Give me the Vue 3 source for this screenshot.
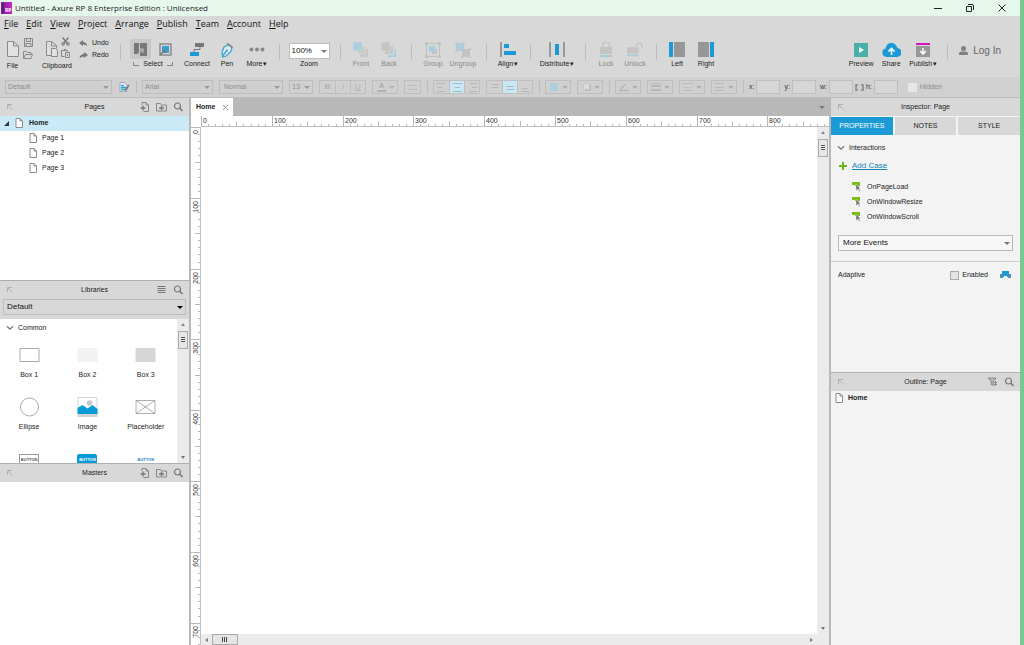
<script setup>
import { ref } from 'vue'

const menus = ['File', 'Edit', 'View', 'Project', 'Arrange', 'Publish', 'Team', 'Account', 'Help']

const tools = [
  { id: 'connect', label: 'Connect', w: 'w38' },
  { id: 'pen', label: 'Pen', w: 'w22' },
  { id: 'more', label: 'More', w: 'w38', menu: true },
]
const arrange = [
  { sep: true, w: 'w8' },
  { id: 'front', label: 'Front', w: 'w34', off: true },
  { id: 'back', label: 'Back', w: 'w22', off: true },
  { sep: true, w: 'w22' },
  { id: 'group', label: 'Group', w: 'w22', off: true },
  { id: 'ungroup', label: 'Ungroup', w: 'w38', off: true },
  { sep: true, w: 'w8' },
  { id: 'align', label: 'Align', w: 'w36', menu: true },
  { sep: true, w: 'w8' },
  { id: 'distribute', label: 'Distribute', w: 'w46', menu: true },
  { sep: true, w: 'w10' },
  { id: 'lock', label: 'Lock', w: 'w32', off: true },
  { id: 'unlock', label: 'Unlock', w: 'w26', off: true },
  { sep: true, w: 'w16' },
  { id: 'left', label: 'Left', w: 'w26' },
  { id: 'right', label: 'Right', w: 'w32' },
]
const share = [
  { id: 'preview', label: 'Preview', w: 'w30' },
  { id: 'share', label: 'Share', w: 'w30' },
  { id: 'publish', label: 'Publish', w: 'w34', menu: true },
]
const lineTools = ['linecolor', 'linewidth', 'linestyle', 'arrowstyle']

const pages = ['Page 1', 'Page 2', 'Page 3']
const widgets = [
  { id: 'box1', label: 'Box 1' },
  { id: 'box2', label: 'Box 2' },
  { id: 'box3', label: 'Box 3' },
  { id: 'ellipse', label: 'Ellipse' },
  { id: 'image', label: 'Image' },
  { id: 'placeholder', label: 'Placeholder' },
]
const events = ['OnPageLoad', 'OnWindowResize', 'OnWindowScroll']
const tabs = ['PROPERTIES', 'NOTES', 'STYLE']
const activeTab = ref('PROPERTIES')

const hundred = 70.8
const ticks = Array.from({ length: 300 }, (_, i) => ({
  pos: Math.round((i * hundred) / 10),
  size: i % 10 === 0 ? 10 : i % 5 === 0 ? 5 : 2,
}))
const marks = (count) => Array.from({ length: count }, (_, i) => ({ pos: Math.round(i * hundred), text: i * 100 }))
const across = marks(9)
const down = marks(8)
</script>

<template>
  <svg class="defs" aria-hidden="true">
    <symbol id="i-page" viewBox="0 0 8 10"><path d="M1 .5h4L7.500 3v6.500H1zM5 .5V3h2.500" fill="#fff" stroke="#8a8a8a" /></symbol>
    <symbol id="i-dock" viewBox="0 0 6 6"><path d="M.5 5V.5H5M1 1l4.500 4.500" fill="none" stroke="#b0b0b0" /></symbol>
    <symbol id="i-search" viewBox="0 0 10 10"><circle cx="4" cy="4" r="3" fill="none" stroke="#777" stroke-width="1.200" /><path d="M6 6l3 3" stroke="#777" stroke-width="1.600" /></symbol>
    <symbol id="i-addpage" viewBox="0 0 10 10"><path d="M2.500 3V.5h4L9 3v6.500H4M6.500.5V3H9" fill="none" stroke="#888" /><path d="M1 6h5M3.500 3.500v5" stroke="#777" stroke-width="1.300" /></symbol>
    <symbol id="i-addfolder" viewBox="0 0 11 10"><path d="M.5 9V1.500h4l1 1.500h5v6z" fill="none" stroke="#888" /><path d="M3 6h5M5.500 3.800v4.400" stroke="#777" stroke-width="1.300" /></symbol>
    <symbol id="i-list" viewBox="0 0 8 8"><path d="M0 .5h8M0 2.500h8M0 4.500h8M0 6.500h8" stroke="#777" /></symbol>
    <symbol id="i-filter" viewBox="0 0 10 10"><path d="M.7 1h8L5.700 4.500v4L3.700 7.500v-3z" fill="#bbb" stroke="#888" /><path d="M8 4v5M6.500 5.500h3M6.500 7.500h3" stroke="#888" /></symbol>
    <symbol id="i-chev" viewBox="0 0 8 6"><path d="M1 1.200l3 3 3-3" fill="none" stroke="#777" stroke-width="1.300" /></symbol>

    <symbol id="i-connect" viewBox="0 0 16 16"><path d="M6 1h9v4H6z" fill="#777" /><path d="M11 5v2.500H5V10" fill="none" stroke="#777" /><path d="M1 10h9v4H1z" fill="#1c9ad6" /></symbol>
    <symbol id="i-pen" viewBox="0 0 16 16"><path d="M5 5l5-2.500 3 3-1 4-5 4.500-3.500 1-.5-5z" fill="#d8e8f0" stroke="#35a0d2" stroke-width="1.200" /><path d="M8 1.500l5.500 4" stroke="#888" stroke-width="1.800" /><path d="M3.500 14l4-5M7 8.500h2" stroke="#35a0d2" stroke-width="1.300" /></symbol>
    <symbol id="i-more" viewBox="0 0 16 16"><g fill="#888"><circle cx="2.500" cy="7.500" r="2" /><circle cx="8" cy="7.500" r="2" /><circle cx="13.500" cy="7.500" r="2" /></g></symbol>
    <symbol id="i-front" viewBox="0 0 16 16"><path d="M7 7h8v8H7z" fill="#c9c9c9" /><path d="M4 4h8v8H4z" fill="#d6d6d6" /><path d="M5 5h6v6H5z" fill="#c5c5c5" /><path d="M0 0h9v9H0z" fill="#abcfdf" stroke="#d8d8d8" stroke-width=".5" /></symbol>
    <symbol id="i-back" viewBox="0 0 16 16"><path d="M7 7h8v8H7z" fill="#abcfdf" /><path d="M4 4h9v9H4z" fill="#d8d8d8" /><path d="M4 4h8v8H4z" fill="#c7c7c7" /><path d="M0 0h9v9H0z" fill="#c5c5c5" stroke="#d8d8d8" stroke-width=".5" /></symbol>
    <symbol id="i-group" viewBox="0 0 16 16"><path d="M1.500 1.500h13v13h-13z" fill="none" stroke="#c2c2c2" /><path d="M0 0h3v3H0zM13 0h3v3h-3zM0 13h3v3H0zM13 13h3v3h-3zM7 7h5v5H7z" fill="#c2c2c2" /><path d="M4 4h6v6H4z" fill="#a8cfe0" /></symbol>
    <symbol id="i-ungroup" viewBox="0 0 16 16"><path d="M1 1h8v8H1z" fill="#afccda" /><path d="M0 0h2v2H0zM8 0h2v2H8zM0 8h2v2H0z" fill="#bcc8ce" /><path d="M7 7h8v8H7z" fill="#c2c2c2" /><path d="M6 6h2v2H6zM14 6h2v2h-2zM6 14h2v2H6zM14 14h2v2h-2z" fill="#c4c4c4" /></symbol>
    <symbol id="i-align" viewBox="0 0 16 16"><path d="M0 0h2v15H0z" fill="#999" /><path d="M4 2h5v4H4zM4 9h12v4H4z" fill="#1c9ad6" /></symbol>
    <symbol id="i-distribute" viewBox="0 0 16 16"><path d="M0 0h2v15H0zM14 0h2v15h-2z" fill="#999" /><path d="M6 2h4v11H6z" fill="#1c9ad6" /></symbol>
    <symbol id="i-lock" viewBox="0 0 16 16"><path d="M4.500 6V3.500a3.500 3.500 0 017 0V6" fill="none" stroke="#c4c4c4" stroke-width="1.500" /><path d="M2 5h12v7H2z" fill="#c4c4c4" /><path d="M2 13h12v2H2z" fill="#a8cbdc" /></symbol>
    <symbol id="i-unlock" viewBox="0 0 18 16"><path d="M10.500 6V3.500a3.200 3.200 0 016.400 0V6" fill="none" stroke="#c4c4c4" stroke-width="1.500" /><path d="M0 5h13v7H0z" fill="#c4c4c4" /><path d="M0 13h13v2H0z" fill="#a8cbdc" /></symbol>
    <symbol id="i-left" viewBox="0 0 16 16"><path d="M0 0h4v15H0z" fill="#1c9ad6" /><path d="M5 0h11v15H5z" fill="#979797" /></symbol>
    <symbol id="i-right" viewBox="0 0 16 16"><path d="M12 0h4v15h-4z" fill="#1c9ad6" /><path d="M0 0h11v15H0z" fill="#979797" /></symbol>
    <symbol id="i-preview" viewBox="0 0 16 16"><path d="M1 1h14v14H1z" fill="#48b0a6" /><path d="M6 5l5 3-5 3z" fill="#fff" /></symbol>
    <symbol id="i-share" viewBox="0 0 19 16"><path d="M4.500 15a4.300 4.300 0 01-.8-8.500C4 3 6.500 1 9.500 1s5.300 2 5.800 5a4.500 4.500 0 01-.5 9z" fill="#1c9ad6" /><path d="M9.500 13V7M6.500 9.500l3-3 3 3" fill="none" stroke="#fff" stroke-width="1.600" /></symbol>
    <symbol id="i-publish" viewBox="0 0 16 16"><path d="M1 1h14v2H1z" fill="#d614b8" /><path d="M1 4h14v11H1z" fill="#979797" /><path d="M8 6v6M5 9l3 3 3-3" fill="none" stroke="#fff" stroke-width="1.500" /></symbol>

    <symbol id="i-linecolor" viewBox="0 0 12 10"><path d="M2 7l6-5M1 8.500h10" stroke="#b5b5b5" stroke-width="1.300" /></symbol>
    <symbol id="i-linewidth" viewBox="0 0 12 10"><path d="M1 1.500h10" stroke="#b5b5b5" /><path d="M1 4h10" stroke="#b5b5b5" stroke-width="2" /><path d="M1 8h10" stroke="#b5b5b5" stroke-width="2" /></symbol>
    <symbol id="i-linestyle" viewBox="0 0 12 10"><path d="M1 1.500h10" stroke="#b5b5b5" stroke-dasharray="3 1" /><path d="M1 5.500h10" stroke="#b5b5b5" stroke-dasharray="1 1" /><path d="M1 8.500h10" stroke="#bbb" /></symbol>
    <symbol id="i-arrowstyle" viewBox="0 0 12 10"><path d="M1 1.500h9M1 5.500h9M1 8.500h9M3 .5v2M8 4v2M3 7.500v2" stroke="#bbb" /></symbol>

    <symbol id="i-box1" viewBox="0 0 20 20"><path d="M.5 3.500h19v13H.5z" fill="#fff" stroke="#aaa" /></symbol>
    <symbol id="i-box2" viewBox="0 0 20 20"><path d="M0 3h20v14H0z" fill="#f2f2f2" /></symbol>
    <symbol id="i-box3" viewBox="0 0 20 20"><path d="M0 3h20v14H0z" fill="#d6d6d6" /></symbol>
    <symbol id="i-ellipse" viewBox="0 0 20 20"><circle cx="10" cy="10" r="9" fill="#fff" stroke="#aaa" /></symbol>
    <symbol id="i-image" viewBox="0 0 20 20"><path d="M.5.5h19v19H.5z" fill="#fff" stroke="#d4d4d4" /><path d="M0 17h20v3H0z" fill="#d4d4d4" /><circle cx="12" cy="6" r="2.800" fill="#c8c8c8" /><path d="M0 11l5-3 5 3.500L15 8l5 4v5H0z" fill="#0a9ad8" /></symbol>
    <symbol id="i-placeholder" viewBox="0 0 20 20"><path d="M.5 3.500h19v13H.5zM.5 3.500l19 13M.5 16.500l19-13" fill="none" stroke="#999" stroke-width=".8" /></symbol>
  </svg>

  <div class="window">
    <header class="titlebar">
      <svg class="logo" viewBox="0 0 11 12"><defs><linearGradient id="lg" x1="0" x2="1"><stop offset="0" stop-color="#7a1a98" /><stop offset="1" stop-color="#c828c8" /></linearGradient></defs><path d="M0 0h11v12H0z" fill="url(#lg)" /><path d="M2 1v10" stroke="#45105f" stroke-width="1" /><text x="4" y="10" font-size="5" font-weight="700" fill="#fff">RP</text></svg>
      <h1>Untitled - Axure RP 8 Enterprise Edition : Unlicensed</h1>
      <div class="winbtns">
        <button aria-label="Minimize"><svg width="8" height="8"><path d="M0 4.500h8" stroke="#222" /></svg></button>
        <button aria-label="Restore"><svg width="8" height="8"><path d="M.5 2.500h5v5h-5zM2 .5h4a1.500 1.500 0 011.500 1.500v4" fill="none" stroke="#222" /></svg></button>
        <button aria-label="Close"><svg width="8" height="8"><path d="M.5.5l7 7M7.500.5l-7 7" stroke="#222" /></svg></button>
      </div>
    </header>

    <nav class="menubar">
      <button v-for="m in menus" :key="m"><u>{{ m[0] }}</u>{{ m.slice(1) }}</button>
    </nav>

    <div class="toolbar">
      <div class="filegroup">
        <button class="tool tall filetool">
          <svg class="mid" width="14" height="16"><path d="M1.500.5h6l5 4.500v10.500h-11zM7.500.5V5h5" fill="#e2e2e2" stroke="#8a8a8a" /></svg>
          <span>File</span>
        </button>
        <div class="stack">
          <button aria-label="Save"><svg width="9" height="9"><path d="M.5.5h8v8h-8zM2.500.5v3h4v-3M2 8V5.500h5V8" fill="none" stroke="#888" /></svg></button>
          <button aria-label="Open"><svg width="10" height="8"><path d="M.5 7V.5h3l1 1H8v2M.5 7.500L2.500 3.500h7L8 7.500z" fill="none" stroke="#888" /></svg></button>
        </div>
      </div>
      <div class="tool tall w44">
        <div class="clip">
          <svg width="14" height="17"><path d="M1.500.5h5l5 4v3M1.500.5v14H6M6.500.5V5h5" fill="#e2e2e2" stroke="#8a8a8a" /><path d="M6.500 7.500h4l2 2v6h-6z" fill="#e2e2e2" stroke="#8a8a8a" /></svg>
          <div class="stack">
            <button aria-label="Cut"><svg width="9" height="9"><path d="M1.500.5l5 6M7.500.5l-5 6" stroke="#777" stroke-width="1.400" /><circle cx="2" cy="7" r="1.300" fill="none" stroke="#777" /><circle cx="7" cy="7" r="1.300" fill="none" stroke="#777" /></svg></button>
            <button aria-label="Paste"><svg width="9" height="9"><path d="M.5 1.500h6M.5 1.500v6h3M3 .5h2M6.500 1.500V3M4.500 3.500h4v5h-4zM6.500 5v2" fill="none" stroke="#888" /></svg></button>
          </div>
        </div>
        <span>Clipboard</span>
      </div>
      <div class="history">
        <button><svg width="9" height="7"><path d="M0 3l4-3v2q4 0 4 4.500Q7 4.500 4 4.500V6z" fill="#777" /></svg>Undo</button>
        <button><svg width="9" height="7"><path d="M9 3L5 0v2Q1 2 .5 6.500 2 4.500 5 4.500V6z" fill="#777" /></svg>Redo</button>
      </div>
      <i class="sep w16"></i>
      <div class="tool select w50">
        <div class="modes">
          <button class="on" aria-label="Select intersected"><svg width="13" height="13"><path d="M0 0h5v11H0zM6 0h7v13H6z" fill="#777" /><path d="M3 12l6-6M5 6h4v4" fill="none" stroke="#bbb" stroke-width="1.200" /></svg></button>
          <button aria-label="Select contained"><svg width="13" height="13"><path d="M1 1h11v11H1z" fill="#d8d8d8" stroke="#8a8a8a" stroke-width="1.500" /><path d="M3 3h7v7H3z" fill="#35a0d2" /><path d="M1 12l5-5M3.500 7H6v3" fill="none" stroke="#777" stroke-width="1.200" /></svg></button>
        </div>
        <span class="bracket"><i></i>Select<i class="r"></i></span>
      </div>
      <button v-for="t in tools" :key="t.id" class="tool" :class="t.w">
        <svg class="ico"><use :href="'#i-' + t.id" /></svg>
        <span :class="{ dd: t.menu }">{{ t.label }}</span>
      </button>
      <i class="sep w6"></i>
      <div class="tool w54">
        <div class="pick zoompick"><select id="zoom"><option>100%</option></select></div>
        <label for="zoom">Zoom</label>
      </div>
      <template v-for="(t, n) in arrange" :key="n">
        <i v-if="t.sep" class="sep" :class="t.w"></i>
        <button v-else class="tool" :class="[t.w, { off: t.off }]">
          <svg class="ico"><use :href="'#i-' + t.id" /></svg>
          <span :class="{ dd: t.menu }">{{ t.label }}</span>
        </button>
      </template>
      <div class="grow"></div>
      <button v-for="t in share" :key="t.id" class="tool" :class="t.w">
        <svg class="ico" :class="{ wide: t.id === 'share' }"><use :href="'#i-' + t.id" /></svg>
        <span :class="{ dd: t.menu }">{{ t.label }}</span>
      </button>
      <i class="sep w14"></i>
      <button class="login"><svg width="9" height="10"><circle cx="4.500" cy="2.500" r="2.500" fill="#808080" /><path d="M0 9V7.500Q0 5.500 2.500 5.500h4Q9 5.500 9 7.500V9z" fill="#808080" /></svg>Log In</button>
    </div>

    <div class="formatbar">
      <div class="pick f-style"><select aria-label="Style"><option>Default</option></select></div>
      <button class="plain" aria-label="Edit style"><svg width="11" height="10"><path d="M1 .5h4.500L8 3v6.500H1z" fill="#e6f2f8" stroke="#8a9aa0" stroke-width=".8" /><path d="M2 3.500h3M2 5.500h5M2 7.500h5" stroke="#35a0d2" stroke-width="1.300" /><path d="M6 8.500l4-5.500" stroke="#777" stroke-width="1.500" /></svg></button>
      <i class="vline"></i>
      <div class="pick f-font"><select aria-label="Font"><option>Arial</option></select></div>
      <div class="pick f-weight"><select aria-label="Weight"><option>Normal</option></select></div>
      <div class="pick f-size"><select aria-label="Size"><option>13</option></select></div>
      <div class="seg">
        <button><b>B</b></button><button><em>I</em></button><button><u>U</u></button>
      </div>
      <button class="drop"><span class="fontcolor">A</span></button>
      <div class="seg"><button aria-label="Bullets"><svg width="9" height="8"><path d="M0 2.500h2M0 6.500h2" stroke="#a8c4d0" /><path d="M3 2.500h6M3 6.500h6" stroke="#bbb" /></svg></button></div>
      <i class="vline"></i>
      <div class="seg">
        <button aria-label="Align left"><svg width="9" height="9"><path d="M0 .5h8M0 4.500h5M0 8.500h8" stroke="#b8b8b8" /></svg></button>
        <button class="on" aria-label="Align center"><svg width="9" height="9"><path d="M0 .5h9M2 4.500h5M0 8.500h9" stroke="#a8b8c0" /></svg></button>
        <button aria-label="Align right"><svg width="9" height="9"><path d="M1 .5h8M4 4.500h5M1 8.500h8" stroke="#b8b8b8" /></svg></button>
      </div>
      <div class="seg">
        <button aria-label="Top"><svg width="8" height="9"><path d="M0 1.500h8M1 4.500h6" stroke="#b8b8b8" /></svg></button>
        <button class="on" aria-label="Middle"><svg width="8" height="9"><path d="M0 3.500h8M0 6.500h8" stroke="#a8b8c0" /></svg></button>
        <button aria-label="Bottom"><svg width="8" height="9"><path d="M1 5.500h6M0 8.500h8" stroke="#b8b8b8" /></svg></button>
      </div>
      <i class="vline"></i>
      <button class="drop" aria-label="Fill"><svg width="12" height="10"><path d="M2 1h8v8H2z" fill="#abcfdf" /></svg></button>
      <button class="drop" aria-label="Shadow"><svg width="12" height="10"><path d="M5 3h6v6H5z" fill="#bcbcbc" /><path d="M3.500 1.500h6v6h-6z" fill="#dadada" stroke="#c6c6c6" /></svg></button>
      <i class="vline"></i>
      <button v-for="l in lineTools" :key="l" class="drop" :aria-label="l"><svg width="12" height="10"><use :href="'#i-' + l" /></svg></button>
      <i class="vline"></i>
      <label class="coord">x:<input type="text" /></label>
      <label class="coord">y:<input type="text" /></label>
      <label class="coord">w:<input type="text" /></label>
      <svg class="link" width="9" height="7"><path d="M3 1H1v5h2M6 1h2v5H6" fill="none" stroke="#888" stroke-width="1.600" /></svg>
      <label class="coord last">h:<input type="text" /></label>
      <label class="hidden"><input type="checkbox" disabled />Hidden</label>
    </div>

    <main class="work">
      <aside class="left">
        <section class="panel">
          <header class="head">
            <svg class="dock"><use href="#i-dock" /></svg><h2>Pages</h2>
            <button aria-label="Add page"><svg><use href="#i-addpage" /></svg></button>
            <button aria-label="Add folder"><svg><use href="#i-addfolder" /></svg></button>
            <button aria-label="Search pages"><svg><use href="#i-search" /></svg></button>
          </header>
          <ul class="tree">
            <li class="root"><svg class="twist" viewBox="0 0 5 5"><path d="M5 0v5H0z" fill="#333" /></svg><svg class="pg"><use href="#i-page" /></svg>Home</li>
            <li v-for="p in pages" :key="p"><svg class="pg"><use href="#i-page" /></svg>{{ p }}</li>
          </ul>
        </section>

        <section class="panel">
          <header class="head">
            <svg class="dock"><use href="#i-dock" /></svg><h2>Libraries</h2>
            <button aria-label="Options"><svg class="small"><use href="#i-list" /></svg></button>
            <button aria-label="Search libraries"><svg><use href="#i-search" /></svg></button>
          </header>
          <div class="libpick"><div class="pick big dark"><select aria-label="Library"><option>Default</option></select></div></div>
          <div class="library">
            <div class="libbody">
              <h3><svg class="chev"><use href="#i-chev" /></svg>Common</h3>
              <div class="widgets">
                <figure v-for="w in widgets" :key="w.id">
                  <svg><use :href="'#i-' + w.id" /></svg>
                  <figcaption>{{ w.label }}</figcaption>
                </figure>
                <figure><span class="btn">BUTTON</span></figure>
                <figure><span class="btn solid">BUTTON</span></figure>
                <figure><span class="btn bare">BUTTON</span></figure>
              </div>
            </div>
            <div class="vscroll"><i class="ar up"></i><i class="thumb"><b></b></i><i class="grow"></i><i class="ar down"></i></div>
          </div>
        </section>

        <section class="panel">
          <header class="head">
            <svg class="dock"><use href="#i-dock" /></svg><h2>Masters</h2>
            <button aria-label="Add master"><svg><use href="#i-addpage" /></svg></button>
            <button aria-label="Add master folder"><svg><use href="#i-addfolder" /></svg></button>
            <button aria-label="Search masters"><svg><use href="#i-search" /></svg></button>
          </header>
        </section>
      </aside>

      <section class="canvas">
        <div class="tabs">
          <div class="tab">Home<button aria-label="Close tab"><svg width="5" height="5"><path d="M0 0l5 5M5 0L0 5" stroke="#999" /></svg></button></div>
          <i class="grow"></i><i class="caret"></i>
        </div>
        <div class="hruler">
          <svg>
            <path v-for="t in ticks" :key="t.pos" :d="`M${t.pos + 0.5} ${10 - t.size}V10`" stroke="#b8b8b8" />
            <text v-for="m in across" :key="m.text" :x="m.pos + 2" y="7">{{ m.text }}</text>
          </svg>
        </div>
        <div class="stage">
          <div class="vruler">
            <svg>
              <path v-for="t in ticks" :key="t.pos" :d="`M${9 - t.size} ${t.pos + 0.5}H9`" stroke="#b8b8b8" />
              <text v-for="m in down" :key="m.text" text-anchor="end" :transform="`translate(7 ${m.pos + 3}) rotate(-90)`">{{ m.text }}</text>
            </svg>
          </div>
          <div class="view">
            <div class="sheet"></div>
            <div class="vscroll"><i class="ar up"></i><i class="thumb"><b></b></i><i class="grow"></i><i class="ar down"></i></div>
            <div class="hscroll"><i class="ar lt"></i><i class="thumb"><b></b></i><i class="grow"></i><i class="ar rt"></i></div>
            <div class="corner"></div>
          </div>
        </div>
      </section>

      <aside class="right">
        <section class="panel">
          <header class="head"><svg class="dock"><use href="#i-dock" /></svg><h2>Inspector: Page</h2></header>
          <div class="itabs">
            <button v-for="t in tabs" :key="t" :class="{ on: t === activeTab }" @click="activeTab = t">{{ t }}</button>
          </div>
          <div class="inter">
            <h3><svg class="chev"><use href="#i-chev" /></svg>Interactions</h3>
            <p class="add"><svg width="8" height="8"><path d="M0 4h8M4 0v8" stroke="#6ab81c" stroke-width="2" /></svg><a href="#">Add Case</a></p>
            <ul>
              <li v-for="e in events" :key="e"><svg width="10" height="10"><path d="M0 0h8v4H3V3H0z" fill="#78be14" /><path d="M4 2l4.500 4.500H7L8 9 7 9.500 6 7 4 8.500z" fill="#777" stroke="#eee" stroke-width=".4" /></svg>{{ e }}</li>
            </ul>
            <div class="pick big pale"><select aria-label="More events"><option>More Events</option></select></div>
          </div>
          <div class="adaptive">
            <span>Adaptive</span>
            <label><input type="checkbox" />Enabled</label>
            <button aria-label="Manage adaptive views"><svg width="11" height="8"><path d="M2 0h7v6H2z" fill="#1c9ad6" /><path d="M0 3h3v4H0zM8 3h3v4H8z" fill="#4f8fb0" /><path d="M4 5h3v1H4z" fill="#fff" /></svg></button>
          </div>
        </section>
        <section class="panel">
          <header class="head">
            <svg class="dock"><use href="#i-dock" /></svg><h2>Outline: Page</h2>
            <button aria-label="Filter"><svg><use href="#i-filter" /></svg></button>
            <button aria-label="Search outline"><svg><use href="#i-search" /></svg></button>
          </header>
          <p class="outline"><svg class="pg"><use href="#i-page" /></svg>Home</p>
        </section>
      </aside>
    </main>
  </div>
</template>

<style>
body { background: #78c890; }
</style>

<style scoped>
* { box-sizing: border-box; }
.defs { position: absolute; width: 0; height: 0; }
.window {
  display: flex; flex-direction: column; height: 100vh; margin-right: 4px;
  background: #d8d8d8; color: #222; overflow: hidden;
  font: 7px/10px "Liberation Sans", Arial, sans-serif;
}
h1, h2, h3, p, ul, figure { margin: 0; padding: 0; font: inherit; list-style: none; }
button { margin: 0; padding: 0; border: 0; background: none; font: inherit; color: inherit; display: flex; align-items: center; justify-content: center; }
select, input { font: inherit; color: inherit; margin: 0; border-radius: 0; }
svg { display: block; flex: none; }
i { font-style: normal; }
.grow { flex: 1; }

.titlebar { flex: none; display: flex; align-items: center; height: 16px; padding-left: 1px; background: #e6f7ec; font-family: "Open Sans", sans-serif; }
.logo { width: 11px; height: 12px; margin-right: 3px; }
.titlebar h1 { flex: 1; font-size: 8px; }
.winbtns { display: flex; padding-right: 2px; }
.winbtns button { width: 32px; height: 16px; }

.menubar { flex: none; display: flex; gap: 8px; height: 16px; padding-left: 4px; font: 9px/16px "Open Sans", sans-serif; color: #111; }
.menubar button { display: block; }

.toolbar { flex: none; display: flex; height: 45px; padding: 9px 19px 0 5px; }
.tool { position: relative; display: flex; flex-direction: column; align-items: center; justify-content: flex-start; height: 28px; flex: none; }
.tall { height: 30px; }
.tool > span, .tool > label { margin-top: auto; line-height: 10px; white-space: nowrap; }
.filegroup { display: flex; width: 30px; flex: none; height: 30px; }
.filetool { width: 15px; }
.stack { display: flex; flex-direction: column; gap: 3px; margin-top: -4px; }
.stack button { height: 10px; }
.filegroup .stack { margin-left: 3px; }
.clip { display: flex; gap: 2px; height: 17px; }
.history { width: 33px; flex: none; margin-top: -4px; }
.history button { gap: 4px; height: 12px; }
.modes { display: flex; gap: 4px; margin-top: -2px; }
.modes button { width: 21px; height: 20px; }
.modes .on { background: #c8c8c8; }
.bracket { display: flex; gap: 4px; align-items: center; }
.bracket i { width: 6px; height: 4px; border: solid #888; border-width: 0 0 1px 1px; }
.bracket .r { border-width: 0 1px 1px 0; }
.ico { width: 16px; height: 16px; margin-top: 1px; }
.ico.wide { width: 19px; }
.off { color: #888; }
.dd::after { content: "▾"; margin-left: 1px; line-height: 1; }
.sep { flex: none; height: 16px; margin-top: 3px; background: linear-gradient(#bdbdbd, #bdbdbd) center / 1px 100% no-repeat; }
.w6 { width: 6px; } .w8 { width: 8px; } .w10 { width: 10px; } .w14 { width: 14px; } .w16 { width: 16px; }
.w22 { width: 22px; } .w26 { width: 26px; } .w30 { width: 30px; } .w32 { width: 32px; } .w34 { width: 34px; }
.w36 { width: 36px; } .w38 { width: 38px; } .w44 { width: 44px; } .w46 { width: 46px; } .w50 { width: 50px; } .w54 { width: 54px; }
.login { gap: 5px; height: 20px; padding-left: 5px; font-size: 10px; color: #666; }

.pick { position: relative; display: flex; flex: none; height: 14px; border: 1px solid #bdbdbd; }
.pick select { width: 100%; padding: 0 2px; border: 0; background: transparent; appearance: none; outline: 0; }
.pick::after, .drop::after, .caret {
  content: ""; position: absolute; right: 2px; top: 50%; margin-top: -1px;
  border: solid transparent; border-width: 3px 3px 0; border-top-color: #999; pointer-events: none;
}
.zoompick { width: 41px; height: 16px; margin-top: 2px; background: #fff; font-size: 8px; color: #111; }
.zoompick::after { border-top-color: #777; }
.big { height: 16px; font-size: 8px; color: #111; }
.big::after { border-top-color: #777; }
.dark select { padding-left: 3px; }
.dark::after { border-top-color: #000; }
.pale { border-color: #b8b8b8; background: #f7f7f7; }
.pale select { padding-left: 4px; }

.formatbar { flex: none; display: flex; align-items: center; gap: 6px; height: 21px; padding: 0 5px; background: #d0d0d0; border-bottom: 1px solid #bbb; color: #8c8c8c; }
.f-style { width: 107px; }
.f-font { width: 71px; }
.f-weight { width: 64px; }
.f-weight select { padding-left: 4px; }
.f-size { width: 24px; }
.plain { width: 12px; }
.vline { width: 1px; height: 12px; margin-right: -1px; background: #bbb; flex: none; }
.seg { display: flex; flex: none; border: 1px solid #bfbfbf; height: 14px; }
.seg button { width: 15px; }
.seg button + button { border-left: 1px solid #bfbfbf; }
.seg .on { background: #c8e8f6; }
.seg b, .seg em, .seg u { font-size: 8px; color: #b0b0b0; }
.drop { position: relative; flex: none; width: 26px; height: 14px; padding-left: 2px; justify-content: flex-start; border: 1px solid #bfbfbf; }
.drop::after { border-top-color: #b0b0b0; }
.fontcolor { width: 9px; margin-left: 2px; font-weight: 700; line-height: 8px; color: #aaa; border-bottom: 2px solid #b0b0b0; }
.coord { display: flex; align-items: center; gap: 2px; margin-right: -2px; color: #333; }
.coord.last { margin-left: -4px; margin-right: 0; }
.coord input { width: 24px; height: 14px; padding: 0 2px; border: 1px solid #bfbfbf; background: #d6d6d6; }
.link { margin-left: -2px; }
.hidden { display: flex; align-items: center; gap: 3px; margin-left: 4px; }
.hidden input { appearance: none; width: 9px; height: 9px; background: #e6e6e6; }

.work { flex: 1; display: grid; grid-template-columns: 191px minmax(0, 1fr) 191px; grid-template-rows: minmax(0, 1fr); min-height: 0; }
.left { display: grid; grid-template-rows: repeat(3, minmax(0, 1fr)); min-height: 0; border-right: 2px solid #b8b8b8; background: #fff; }
.right { display: grid; grid-template-rows: repeat(2, minmax(0, 1fr)); min-height: 0; border-left: 2px solid #b8b8b8; background: #f3f3f3; }
.panel { display: flex; flex-direction: column; min-height: 0; overflow: hidden; }
.panel + .panel { border-top: 1px solid #b0b0b0; }
.head { position: relative; flex: none; display: flex; align-items: center; justify-content: flex-end; gap: 6px; height: 18px; padding-right: 5px; background: #d8d8d8; }
.head h2 { position: absolute; inset: 0; line-height: 18px; text-align: center; pointer-events: none; }
.head .dock { width: 6px; height: 6px; margin-left: 7px; margin-right: auto; }
.head button svg { width: 11px; height: 10px; }
.head button svg.small { height: 8px; }

.tree li { display: flex; align-items: center; gap: 5px; height: 15px; padding: 0 0 1px 29px; }
.tree .root { gap: 6px; padding-left: 4px; background: #cbeaf8; font-weight: 700; }
.twist { width: 5px; height: 5px; }
.pg { width: 8px; height: 10px; }

.libpick { flex: none; padding: 0 3px 4px; background: #d8d8d8; }
.library { flex: 1; display: flex; min-height: 0; }
.libbody { flex: 1; min-width: 0; overflow: hidden; }
h3 { display: flex; align-items: center; gap: 4px; height: 18px; padding-left: 6px; }
.chev { width: 8px; height: 6px; }
.widgets { display: grid; grid-template-columns: repeat(3, 1fr); padding: 8px 2px 0 0; }
figure { display: flex; flex-direction: column; align-items: center; height: 52px; gap: 5px; }
figure svg { width: 21px; height: 20px; }
.btn { width: 20px; height: 11px; margin-top: 5px; border: 1px solid #999; font: 700 4px/10px "Liberation Sans", sans-serif; text-align: center; color: #555; display: flex; justify-content: center; }
.btn.solid { border-color: #0a9ad8; border-radius: 2px; background: #0a9ad8; color: #fff; }
.btn.bare { border-color: transparent; color: #2a7fc8; }

.vscroll { display: flex; flex-direction: column; align-items: center; width: 12px; padding: 4px 0; background: #ebebeb; }
.hscroll { display: flex; align-items: center; height: 11px; padding: 0 4px; background: #ebebeb; }
.ar { border: 2px solid transparent; }
.up { border-top-width: 0; border-bottom: 3px solid #888; }
.down { border-bottom-width: 0; border-top: 3px solid #777; }
.lt { border-left-width: 0; border-right: 3px solid #777; }
.rt { border-right-width: 0; border-left: 3px solid #777; }
.thumb { display: flex; align-items: center; justify-content: center; border: 1px solid #aaa; background: #e6e6e6; }
.vscroll .thumb { width: 10px; height: 18px; margin-top: 5px; }
.vscroll .thumb b { width: 4px; height: 6px; background: repeating-linear-gradient(#555 0 1px, transparent 1px 2px); }
.hscroll .thumb { width: 26px; height: 11px; margin-left: 4px; }
.hscroll .thumb b { width: 6px; height: 5px; background: repeating-linear-gradient(90deg, #444 0 1px, transparent 1px 2px); }

.canvas { display: flex; flex-direction: column; min-width: 0; min-height: 0; background: #fff; }
.tabs { position: relative; flex: none; display: flex; height: 18px; background: #b8b8b8; }
.tab { display: flex; align-items: center; gap: 8px; padding: 0 5px; background: #fff; font-weight: 700; }
.caret { right: 4px; border-top-color: #777; }
.hruler { flex: none; height: 11px; margin-left: 10px; border-bottom: 1px solid #c0c0c0; }
.hruler svg { width: 100%; height: 10px; }
.stage { flex: 1; display: flex; min-height: 0; }
.vruler { flex: none; width: 10px; border-right: 1px solid #c0c0c0; overflow: hidden; }
.vruler svg { width: 9px; height: 100%; }
.hruler text, .vruler text { font-size: 7px; fill: #333; }
.view { flex: 1; display: grid; grid-template-columns: 1fr 12px; grid-template-rows: 1fr 11px; }
.corner { background: #ebebeb; }

.itabs { flex: none; display: grid; grid-template-columns: repeat(3, 1fr); gap: 2px; padding-top: 1px; height: 19px; }
.itabs button { background: #d8d8d8; }
.itabs .on { background: #1c9ad6; color: #fff; }
.inter { flex: none; padding: 4px 7px 10px 0; border-bottom: 1px solid #ccc; }
.add { display: flex; align-items: center; gap: 5px; height: 18px; padding-left: 8px; font-size: 8px; }
.add a { color: #1585b8; }
.inter ul { padding: 4px 0 11px 21px; }
.inter li { display: flex; align-items: center; gap: 5px; height: 15px; }
.inter .pick { margin-left: 7px; }
.adaptive { display: flex; align-items: center; gap: 12px; height: 26px; padding: 0 9px 0 7px; }
.adaptive span { flex: 1; }
.adaptive label { display: flex; align-items: center; gap: 3px; }
.adaptive input { appearance: none; width: 9px; height: 9px; border: 1px solid #aaa; background: #e4e4e4; }
.outline { display: flex; align-items: center; gap: 5px; height: 14px; padding-left: 4px; font-weight: 700; }
</style>
